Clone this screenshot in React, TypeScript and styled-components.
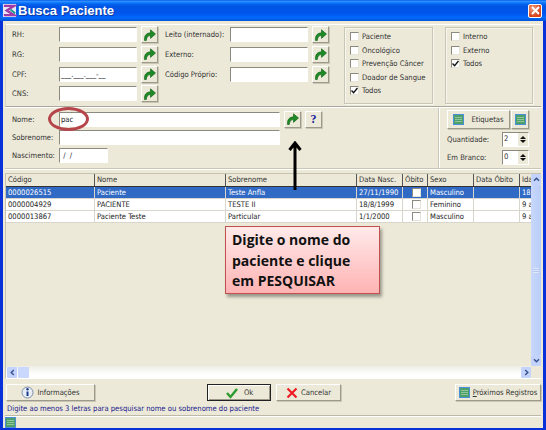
import React from 'react';
import styled, { createGlobalStyle } from 'styled-components';

const GlobalStyle = createGlobalStyle`
  html, body { margin: 0; padding: 0; background: #ece9d8; }
  body { font-family: 'DejaVu Sans Condensed', 'DejaVu Sans', sans-serif; }
`;

const Window = styled.div`
  position: relative;
  width: 546px;
  height: 430px;
  overflow: hidden;
  display: flex;
  flex-direction: column;
  background: #0831d9;
  font-family: 'DejaVu Sans Condensed', 'DejaVu Sans', sans-serif;
  font-stretch: condensed;
  font-size: 7.6px;
  color: #222;
`;

const TitleBar = styled.div`
  height: 21px;
  flex: none;
  display: flex;
  align-items: center;
  padding: 0 4px 0 2px;
  gap: 1px;
  background: linear-gradient(#0058ee 0%, #3593ff 6%, #127dff 12%, #0262ee 20%, #0054e3 32%, #0055eb 60%, #005bf5 72%, #026afe 82%, #0062ef 90%, #0052d6 100%);
  color: #fff;
  font-family: 'Liberation Sans', Arial, sans-serif;
  font-stretch: normal;
  font-size: 13px;
  font-weight: bold;
  text-shadow: 1px 1px 0 #0f3aa0;
`;

const TitleText = styled.span`
  flex: 1;
`;

const CloseButton = styled.div`
  width: 14px;
  height: 14px;
  box-sizing: border-box;
  border: 1px solid #fff;
  border-radius: 2px;
  background: radial-gradient(circle at 35% 30%, #f0a080, #d8431c 70%);
  display: flex;
  align-items: center;
  justify-content: center;
`;

const Body = styled.div`
  flex: 1;
  min-height: 0;
  margin: 0 3px 2px;
  padding: 3px 2px 0;
  background: #ece9d8;
  display: flex;
  flex-direction: column;
`;

const TopPanel = styled.div`
  height: 83px;
  flex: none;
  display: flex;
  border-bottom: 1px solid #aca899;
  box-shadow: 0 1px 0 #fff;
  border-top: 1px solid #fff;
  border-left: 1px solid #d8d4c4;
  padding-left: 6px;
  box-sizing: border-box;
`;

const FieldColumn = styled.div<{ $width: number }>`
  width: ${(p) => p.$width}px;
  flex: none;
  display: flex;
  flex-direction: column;
`;

const FieldRow = styled.div<{ $height?: number }>`
  height: ${(p) => p.$height ?? 19.67}px;
  display: flex;
  align-items: center;
`;

const Label = styled.span<{ $width: number }>`
  width: ${(p) => p.$width}px;
  flex: none;
  white-space: nowrap;
  color: #333;
`;

const Input = styled.div<{ $width: number }>`
  width: ${(p) => p.$width}px;
  height: 15px;
  flex: none;
  box-sizing: border-box;
  background: #fff;
  border-style: solid;
  border-width: 1px;
  border-color: #8c8a7e #fff #fff #8c8a7e;
  padding-left: 1px;
  line-height: 13px;
  color: #222;
  white-space: nowrap;
  overflow: hidden;
`;

const ToolButton = styled.div<{ $left?: number }>`
  width: 17px;
  height: 17px;
  flex: none;
  margin-left: ${(p) => p.$left ?? 4}px;
  box-sizing: border-box;
  display: flex;
  align-items: center;
  justify-content: center;
  background: #ece9d8;
  border-style: solid;
  border-width: 1px;
  border-color: #fff #9d9a8b #9d9a8b #fff;
  box-shadow: 1px 1px 0 #c9c6b6;
`;

const Question = styled.span`
  font-family: 'Liberation Serif', serif;
  font-stretch: normal;
  font-weight: bold;
  font-size: 12px;
  color: #1a1a9c;
`;

const CheckGroup = styled.div<{ $width: number; $left: number }>`
  width: ${(p) => p.$width}px;
  height: 77px;
  flex: none;
  margin: 2px 0 0 ${(p) => p.$left}px;
  box-sizing: border-box;
  border: 1px solid #c9c6b6;
  box-shadow: inset 1px 1px 0 #f7f6ef, 1px 1px 0 #f7f6ef;
  padding: 2px 0 0 5px;
  display: flex;
  flex-direction: column;
`;

const CheckRow = styled.div`
  height: 13.5px;
  flex: none;
  display: flex;
  align-items: center;
  gap: 3px;
  white-space: nowrap;
  color: #333;
`;

const CheckBox = styled.span`
  width: 9px;
  height: 9px;
  flex: none;
  box-sizing: border-box;
  display: inline-flex;
  align-items: center;
  justify-content: center;
  background: #fff;
  border-style: solid;
  border-width: 1px;
  border-color: #8c8a7e #e6e4d8 #e6e4d8 #8c8a7e;
`;

const NamePanel = styled.div`
  height: 61px;
  flex: none;
  display: flex;
  margin-top: 1px;
  box-sizing: border-box;
  border-bottom: 1px solid #c9c6b6;
  box-shadow: 0 1px 0 #fff;
`;

const NameFields = styled.div`
  width: 433px;
  flex: none;
  box-sizing: border-box;
  padding: 2px 0 0 7px;
  display: flex;
  flex-direction: column;
`;

const LabelsPanel = styled.div`
  flex: 1;
  border-left: 1px solid #c9c6b6;
  box-shadow: inset 1px 0 0 #fff;
  padding: 2px 0 0 8px;
  display: flex;
  flex-direction: column;
`;

const LabelButtons = styled.div`
  display: flex;
  gap: 1px;
`;

const LabelButton = styled.div<{ $width: number }>`
  width: ${(p) => p.$width}px;
  height: 19px;
  box-sizing: border-box;
  display: flex;
  align-items: center;
  justify-content: center;
  gap: 7px;
  border-style: solid;
  border-width: 1px;
  border-color: #fff #9d9a8b #9d9a8b #fff;
  box-shadow: 1px 1px 0 #c9c6b6;
  color: #333;
`;

const SpinRow = styled.div`
  height: 17px;
  margin-top: 1.5px;
  display: flex;
  align-items: center;
  width: 82px;
  justify-content: space-between;
  color: #333;
`;

const Spin = styled.div`
  width: 27px;
  height: 15px;
  box-sizing: border-box;
  display: flex;
  justify-content: space-between;
  background: #fff;
  border-style: solid;
  border-width: 1px;
  border-color: #8c8a7e #fff #fff #8c8a7e;
  padding-left: 1px;
  line-height: 11px;
`;

const SpinArrows = styled.div`
  width: 10px;
  background: #ece9d8;
  border-left: 1px solid #fff;
  display: flex;
  flex-direction: column;
  align-items: center;
  justify-content: center;
  gap: 1px;
`;

const ArrowUp = styled.i`
  width: 0;
  height: 0;
  border: 3px solid transparent;
  border-top: 0;
  border-bottom: 3px solid #111;
`;

const ArrowDown = styled(ArrowUp)`
  border-bottom: 0;
  border-top: 3px solid #111;
`;

const GridFrame = styled.div`
  height: 206px;
  flex: none;
  margin-top: 4px;
  box-sizing: border-box;
  border-top: 1px solid #c6c3b3;
  border-left: 1px solid #c6c3b3;
  border-bottom: 1px solid #fff;
  display: grid;
  grid-template-columns: 1fr 10px;
  grid-template-rows: 1fr 12px;
`;

const GridArea = styled.div`
  min-width: 0;
  overflow: hidden;
`;

const columns = '88px 131px 131px 46px 25px 46px 46px 12px';

const HeaderRow = styled.div`
  height: 12px;
  display: grid;
  grid-template-columns: ${columns};
  background: #ece9d8;
  border-bottom: 1px solid #333;
`;

const HeaderCell = styled.div`
  padding-left: 2px;
  line-height: 12px;
  border-left: 1px solid #555;
  white-space: nowrap;
  overflow: hidden;
  color: #333;
  &:first-child { border-left: 0; }
`;

const DataRow = styled.div<{ $selected?: boolean }>`
  height: 11px;
  display: grid;
  grid-template-columns: ${columns};
  background: ${(p) => (p.$selected ? '#316ac5' : '#fff')};
  color: ${(p) => (p.$selected ? '#fff' : '#222')};
  border-bottom: 1px solid #d8d6cc;
`;

const DataCell = styled.div<{ $center?: boolean }>`
  padding-left: 2px;
  line-height: 11px;
  border-left: 1px solid #d8d6cc;
  white-space: nowrap;
  overflow: hidden;
  display: ${(p) => (p.$center ? 'flex' : 'block')};
  justify-content: center;
  align-items: center;
  &:first-child { border-left: 0; }
`;

const VScroll = styled.div`
  display: flex;
  flex-direction: column;
  min-height: 0;
  background: #f3f5fb;
`;

const ScrollBtn = styled.div`
  width: 10px;
  height: 11px;
  flex: none;
  background: #c3d3fb;
  border-radius: 1px;
  display: flex;
  align-items: center;
  justify-content: center;
`;

const VThumb = styled.div`
  flex: 1;
  background: linear-gradient(90deg, #c9d8fc, #b8cdf9);
  border-radius: 1px;
  display: flex;
  align-items: center;
  justify-content: center;
`;

const Grip = styled.i`
  width: 6px;
  height: 5px;
  background: repeating-linear-gradient(#dfe8fe 0 1px, #b3c6f3 1px 2px);
`;

const HScroll = styled.div`
  display: flex;
  align-items: center;
  background: linear-gradient(#eeede5, #fff 70%);
  padding-left: 1px;
`;

const HThumb = styled.div`
  width: 11px;
  height: 11px;
  margin-left: 1px;
  background: #c9d8fc;
  border-radius: 1px;
`;

const HSpacer = styled.div`
  flex: 1;
`;

const Corner = styled.div`
  background: #ece9d8;
`;

const ButtonBar = styled.div`
  height: 17px;
  flex: none;
  margin-top: 5px;
  display: flex;
  align-items: flex-start;
  padding-left: 1px;
`;

const BarButton = styled.div<{ $width: number; $left?: number; $default?: boolean }>`
  width: ${(p) => p.$width}px;
  height: 17px;
  margin-left: ${(p) => p.$left ?? 0}px;
  flex: none;
  box-sizing: border-box;
  display: flex;
  align-items: center;
  justify-content: center;
  gap: 3px;
  white-space: nowrap;
  color: #333;
  border-style: solid;
  border-width: 1px;
  border-color: ${(p) => (p.$default ? '#222' : '#fff #9d9a8b #9d9a8b #fff')};
  box-shadow: ${(p) => (p.$default ? 'inset 1px 1px 0 #fff, inset -1px -1px 0 #9d9a8b' : '1px 1px 0 #c9c6b6')};
`;

const Hint = styled.div`
  height: 13px;
  flex: none;
  margin-top: 1px;
  padding-left: 2px;
  line-height: 13px;
  color: #1a1a8c;
  border-bottom: 1px solid #bdb9a8;
  box-shadow: 0 1px 0 #fff;
`;

const StatusBar = styled.div`
  flex: 1;
  display: flex;
  align-items: center;
  margin-top: 1px;
`;

const Ellipse = styled.div`
  position: absolute;
  left: 48px;
  top: 107px;
  width: 35px;
  height: 18px;
  border: 3px solid #b5454a;
  border-radius: 50%;
`;

const Callout = styled.div`
  position: absolute;
  left: 225px;
  top: 226px;
  width: 155px;
  height: 68px;
  box-sizing: border-box;
  padding: 3px 0 0 6px;
  border: 1px solid #c0504d;
  background: linear-gradient(#ffeaea, #ffb3b3);
  box-shadow: 2px 3px 3px rgba(0, 0, 0, 0.35);
  font-family: 'Open Sans', sans-serif;
  font-stretch: normal;
  font-weight: bold;
  font-size: 14px;
  line-height: 20.5px;
  color: #111;
`;

const Pointer = styled.svg`
  position: absolute;
  left: 288px;
  top: 141px;
`;

function GoIcon() {
  return (
    <svg width="13" height="12" viewBox="0 0 13 12">
      <path
        d="M1.5 11.5 C1 6.5 3.5 4 7.5 3.8 L7.5 .8 L12.5 5 L7.5 9.4 L7.5 6.6 C5 6.6 3.6 8 3.3 11.5 Z"
        fill="#1d8a26"
        stroke="#0c5c14"
        strokeWidth=".6"
      />
    </svg>
  );
}

function ListIcon() {
  return (
    <svg width="11" height="11" viewBox="0 0 11 11">
      <rect x=".5" y=".5" width="10" height="10" fill="#4f9f6b" stroke="#4a90d9" />
      <path d="M2 3.5h7M2 5.5h7M2 7.5h7" stroke="#9fd0a6" strokeWidth=".8" />
    </svg>
  );
}

function TickMark() {
  return (
    <svg width="7" height="7" viewBox="0 0 7 7">
      <path d="M.5 3.5 L2.6 5.7 L6.5 1" fill="none" stroke="#111" strokeWidth="1.4" />
    </svg>
  );
}

function Check({ label, checked }: { label: string; checked?: boolean }) {
  return (
    <CheckRow>
      <CheckBox>{checked && <TickMark />}</CheckBox>
      {label}
    </CheckRow>
  );
}

function Chevron({ rotate }: { rotate: number }) {
  return (
    <svg width="7" height="7" viewBox="0 0 7 7" style={{ transform: `rotate(${rotate}deg)` }}>
      <path d="M1 4.8 L3.5 2.2 L6 4.8" fill="none" stroke="#37518f" strokeWidth="1.4" />
    </svg>
  );
}

const fieldsLeft = ['RH:', 'RG:', 'CPF:', 'CNS:'];
const fieldsRight = ['Leito (internado):', 'Externo:', 'Código Próprio:'];

const patients = [
  { code: '0000026515', name: 'Paciente', last: 'Teste Anfla', birth: '27/11/1990', sex: 'Masculino', age: '18', selected: true },
  { code: '0000004929', name: 'PACIENTE', last: 'TESTE II', birth: '18/8/1999', sex: 'Feminino', age: '9 a' },
  { code: '0000013867', name: 'Paciente Teste', last: 'Particular', birth: '1/1/2000', sex: 'Masculino', age: '9 a' },
];

const headers = ['Código', 'Nome', 'Sobrenome', 'Data Nasc.', 'Óbito', 'Sexo', 'Data Óbito', 'Ida'];

export default function App() {
  return (
    <Window>
      <GlobalStyle />
      <TitleBar>
        <svg width="15" height="15" viewBox="0 0 16 16">
          <rect x="1" y="1" width="14" height="14" fill="#e8e8f4" />
          <path d="M2 3 L13 3 L5 8 L13 13 L2 13" fill="none" stroke="#a03aa8" strokeWidth="2.4" />
          <path d="M9 7 L14 11" stroke="#1c9a8a" strokeWidth="2" />
        </svg>
        <TitleText>Busca Paciente</TitleText>
        <CloseButton>
          <svg width="9" height="9" viewBox="0 0 9 9">
            <path d="M1 1 L8 8 M8 1 L1 8" stroke="#fff" strokeWidth="1.8" />
          </svg>
        </CloseButton>
      </TitleBar>
      <Body>
        <TopPanel>
          <FieldColumn $width={153}>
            {fieldsLeft.map((f) => (
              <FieldRow key={f}>
                <Label $width={47}>{f}</Label>
                <Input $width={78}>{f === 'CPF:' ? '___.___.___-__' : ''}</Input>
                <ToolButton><GoIcon /></ToolButton>
              </FieldRow>
            ))}
          </FieldColumn>
          <FieldColumn $width={171}>
            {fieldsRight.map((f) => (
              <FieldRow key={f}>
                <Label $width={65}>{f}</Label>
                <Input $width={78}>{''}</Input>
                <ToolButton><GoIcon /></ToolButton>
              </FieldRow>
            ))}
          </FieldColumn>
          <CheckGroup $width={89} $left={8}>
            <Check label="Paciente" />
            <Check label="Oncológico" />
            <Check label="Prevenção Câncer" />
            <Check label="Doador de Sangue" />
            <Check label="Todos" checked />
          </CheckGroup>
          <CheckGroup $width={88} $left={12}>
            <Check label="Interno" />
            <Check label="Externo" />
            <Check label="Todos" checked />
          </CheckGroup>
        </TopPanel>
        <NamePanel>
          <NameFields>
            <FieldRow $height={18}>
              <Label $width={47}>Nome:</Label>
              <Input $width={221}>pac</Input>
              <ToolButton><GoIcon /></ToolButton>
              <ToolButton><Question>?</Question></ToolButton>
            </FieldRow>
            <FieldRow $height={18.5}>
              <Label $width={47}>Sobrenome:</Label>
              <Input $width={221}>{''}</Input>
            </FieldRow>
            <FieldRow $height={18.5}>
              <Label $width={47}>Nascimento:</Label>
              <Input $width={49}>&nbsp;/&nbsp;&nbsp;/</Input>
            </FieldRow>
          </NameFields>
          <LabelsPanel>
            <LabelButtons>
              <LabelButton $width={63}><ListIcon />Etiquetas</LabelButton>
              <LabelButton $width={18}><ListIcon /></LabelButton>
            </LabelButtons>
            <SpinRow>
              Quantidade:
              <Spin>2<SpinArrows><ArrowUp /><ArrowDown /></SpinArrows></Spin>
            </SpinRow>
            <SpinRow>
              Em Branco:
              <Spin>0<SpinArrows><ArrowUp /><ArrowDown /></SpinArrows></Spin>
            </SpinRow>
          </LabelsPanel>
        </NamePanel>
        <GridFrame>
          <GridArea>
            <HeaderRow>
              {headers.map((h) => <HeaderCell key={h}>{h}</HeaderCell>)}
            </HeaderRow>
            {patients.map((p) => (
              <DataRow key={p.code} $selected={p.selected}>
                <DataCell>{p.code}</DataCell>
                <DataCell>{p.name}</DataCell>
                <DataCell>{p.last}</DataCell>
                <DataCell>{p.birth}</DataCell>
                <DataCell $center><CheckBox /></DataCell>
                <DataCell>{p.sex}</DataCell>
                <DataCell />
                <DataCell>{p.age}</DataCell>
              </DataRow>
            ))}
          </GridArea>
          <VScroll>
            <ScrollBtn><Chevron rotate={0} /></ScrollBtn>
            <VThumb><Grip /></VThumb>
            <ScrollBtn><Chevron rotate={180} /></ScrollBtn>
          </VScroll>
          <HScroll>
            <ScrollBtn><Chevron rotate={-90} /></ScrollBtn>
            <HThumb />
            <HSpacer />
            <ScrollBtn><Chevron rotate={90} /></ScrollBtn>
          </HScroll>
          <Corner />
        </GridFrame>
        <ButtonBar>
          <BarButton $width={89}>
            <svg width="13" height="13" viewBox="0 0 13 13">
              <circle cx="6.5" cy="6.5" r="5.5" fill="#e8eef8" stroke="#7d8ca8" />
              <path d="M6.5 5.5v4.5" stroke="#1a3c8c" strokeWidth="2" />
              <circle cx="6.5" cy="3.3" r="1.2" fill="#1a3c8c" />
            </svg>
            Informações
          </BarButton>
          <BarButton $width={64} $left={112} $default>
            <svg width="14" height="12" viewBox="0 0 14 12">
              <path d="M2 6 L5.5 10 L12 2" fill="none" stroke="#2c9a2e" strokeWidth="2.4" />
            </svg>
            &nbsp;Ok
          </BarButton>
          <BarButton $width={65} $left={5}>
            <svg width="12" height="12" viewBox="0 0 12 12">
              <path d="M1.5 1.5 L10.5 10.5 M10.5 1.5 L1.5 10.5" stroke="#ee1c25" strokeWidth="2.2" />
            </svg>
            Cancelar
          </BarButton>
          <BarButton $width={86} $left={114}>
            <ListIcon />
            <span><u>P</u>róximos Registros</span>
          </BarButton>
        </ButtonBar>
        <Hint>Digite ao menos 3 letras para pesquisar nome ou sobrenome do paciente</Hint>
        <StatusBar><ListIcon /></StatusBar>
      </Body>
      <Ellipse />
      <Pointer width="14" height="50" viewBox="0 0 14 50">
        <path d="M7 49 V3 M1.5 9 L7 2 L12.5 9" fill="none" stroke="#000" strokeWidth="3" />
      </Pointer>
      <Callout>Digite o nome do<br />paciente e clique<br />em PESQUISAR</Callout>
    </Window>
  );
}
